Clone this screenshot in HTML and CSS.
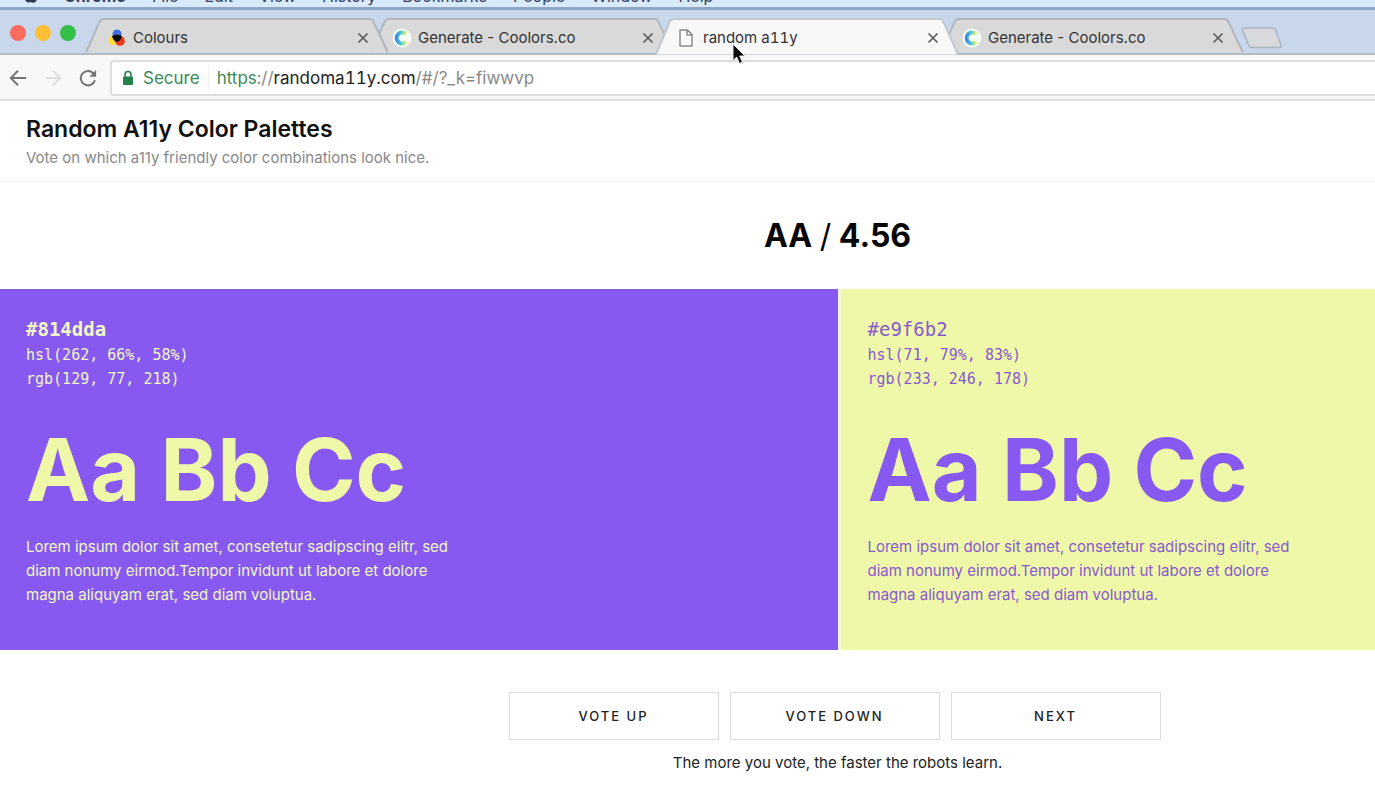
FILE: index.html
```html
<!DOCTYPE html>
<html lang="en">
<head>
<meta charset="utf-8">
<title>random a11y</title>
<link rel="stylesheet" href="styles.css">
</head>
<body>
<svg class="defs" aria-hidden="true">
  <defs>
    <linearGradient id="ring" x1="0" y1="0" x2="1" y2="0">
      <stop offset="0" stop-color="#3f8fe0"/><stop offset=".45" stop-color="#45c8dc"/><stop offset="1" stop-color="#e6f56a"/>
    </linearGradient>
    <symbol id="tab-shape" viewBox="0 0 302 36" preserveAspectRatio="none">
      <path d="M0 35.500 L14 3 Q15.500 1 18 1 H284 Q286 1 287 3 L302 35.500" stroke-width="2" vector-effect="non-scaling-stroke"/>
    </symbol>
    <symbol id="coolors" viewBox="0 0 20 20">
      <circle cx="10" cy="10" r="9.500" fill="#f4fbf4"/>
      <path d="M14 6 A5.500 5.500 0 1 0 14 14" fill="none" stroke="url(#ring)" stroke-width="4"/>
    </symbol>
    <symbol id="close" viewBox="0 0 12 12">
      <path d="M1.500 1.500 L10.500 10.500 M10.500 1.500 L1.500 10.500" fill="none" stroke="#5c5c5c" stroke-width="1.700"/>
    </symbol>
  </defs>
</svg>
<div class="window">
  <nav class="menubar" aria-label="Menu bar">
    <svg class="apple" viewBox="0 0 16 18"><path d="M8 5 C10 4 13 3 15 6 C12 8 13 12 16 13 C14 17 12 19 8 17 C4 19 1 15 1 10 C1 5 5 3 8 5Z" fill="#2b3850"/></svg>
    <b>Chrome</b><span>File</span><span>Edit</span><span>View</span><span>History</span><span>Bookmarks</span><span>People</span><span>Window</span><span>Help</span>
  </nav>
  <div class="tabstrip">
    <div class="lights"><i class="red"></i><i class="yellow"></i><i class="green"></i></div>
    <div class="tabs">
      <div class="tab first">
        <svg class="shape"><use href="#tab-shape"/></svg>
        <svg class="favicon" viewBox="0 0 20 20"><circle cx="10" cy="6" r="4.500" fill="#3f6fe0"/><circle cx="6" cy="12.500" r="4.500" fill="#ffe02e"/><circle cx="13" cy="13" r="4.800" fill="#ef3b1c"/><path d="M5 8 Q10 5 15 8 Q14 13 10 14 Q6 13 5 8Z" fill="#0b0b10"/></svg>
        <span class="label">Colours</span>
        <button class="close" aria-label="Close Colours"><svg><use href="#close"/></svg></button>
      </div>
      <div class="tab">
        <svg class="shape"><use href="#tab-shape"/></svg>
        <svg class="favicon"><use href="#coolors"/></svg>
        <span class="label">Generate - Coolors.co</span>
        <button class="close" aria-label="Close Generate"><svg><use href="#close"/></svg></button>
      </div>
      <div class="tab active">
        <svg class="shape"><use href="#tab-shape"/></svg>
        <svg class="favicon" viewBox="0 0 20 20"><path d="M3 2 H10.500 L15 6.500 V18 H3Z M10 2.500 V7 H15" fill="#fff" stroke="#8a8a8a" stroke-width="1.500" stroke-linejoin="round"/></svg>
        <span class="label">random a11y</span>
        <button class="close" aria-label="Close random a11y"><svg><use href="#close"/></svg></button>
        <svg class="pointer" viewBox="0 0 14 22"><path d="M1 1 V17.500 L4.700 14 L7.500 20.500 L10.500 19.200 L7.700 13 H13Z" fill="#0a0a0a" stroke="#eee" stroke-width="1"/></svg>
      </div>
      <div class="tab">
        <svg class="shape"><use href="#tab-shape"/></svg>
        <svg class="favicon"><use href="#coolors"/></svg>
        <span class="label">Generate - Coolors.co</span>
        <button class="close" aria-label="Close Generate"><svg><use href="#close"/></svg></button>
      </div>
    </div>
    <button class="newtab" aria-label="New tab"><svg viewBox="0 0 42 22"><path d="M3 1 H31 Q33.500 1 34.500 3 L40 18 Q41 20.500 38.500 20.500 H11 Q8.500 20.500 7.500 18 L1.500 3 Q1 1 3 1Z" fill="#d8d9dc" stroke="#a9b3c4" stroke-width="1.500"/></svg></button>
  </div>
  <div class="toolbar">
    <button class="tool" aria-label="Back"><svg viewBox="0 0 20 20"><path d="M19 10 H2.500 M10 2 L2 10 L10 18" fill="none" stroke="#747474" stroke-width="2.200"/></svg></button>
    <button class="tool" aria-label="Forward"><svg viewBox="0 0 20 20"><path d="M2 10 H17.500 M10 2 L18 10 L10 18" fill="none" stroke="#dedede" stroke-width="2.200"/></svg></button>
    <button class="tool" aria-label="Reload"><svg viewBox="0 0 20 20"><path d="M16.500 5.500 A8 8 0 1 0 17.700 12.500" fill="none" stroke="#747474" stroke-width="2.200"/><path d="M19 1 V8.500 H11.500Z" fill="#747474"/></svg></button>
    <div class="omnibox">
      <svg class="lock" viewBox="0 0 12 16"><path d="M3 7 V4.500 A3 3 0 0 1 9 4.500 V7" fill="none" stroke="#238048" stroke-width="1.600"/><rect x="1" y="6.500" width="10" height="8.500" rx="1" fill="#238048"/></svg>
      <span class="secure">Secure</span>
      <span class="url"><em>https</em>://<strong>randoma11y.com</strong>/#/?_k=fiwwvp</span>
    </div>
  </div>
  <header class="header">
    <h1>Random A11y Color Palettes</h1>
    <p>Vote on which a11y friendly color combinations look nice.</p>
  </header>
  <main>
    <h2 class="rating">AA <span>/</span> 4.56</h2>
    <div class="panels">
      <section class="panel violet">
        <p class="hex">#814dda</p>
        <p class="code">hsl(262, 66%, 58%)</p>
        <p class="code">rgb(129, 77, 218)</p>
        <p class="sample">Aa Bb Cc</p>
        <p class="lorem">Lorem ipsum dolor sit amet, consetetur sadipscing elitr, sed diam nonumy eirmod.Tempor invidunt ut labore et dolore magna aliquyam erat, sed diam voluptua.</p>
      </section>
      <section class="panel lime">
        <p class="hex">#e9f6b2</p>
        <p class="code">hsl(71, 79%, 83%)</p>
        <p class="code">rgb(233, 246, 178)</p>
        <p class="sample">Aa Bb Cc</p>
        <p class="lorem">Lorem ipsum dolor sit amet, consetetur sadipscing elitr, sed diam nonumy eirmod.Tempor invidunt ut labore et dolore magna aliquyam erat, sed diam voluptua.</p>
      </section>
    </div>
    <div class="votes">
      <button>VOTE UP</button>
      <button>VOTE DOWN</button>
      <button>NEXT</button>
    </div>
    <p class="note">The more you vote, the faster the robots learn.</p>
  </main>
</div>
</body>
</html>
```
FILE: styles.css
```css
* { box-sizing: border-box; margin: 0; padding: 0; }
body { overflow: hidden; background: #fff; color: #111; font-family: Inter, "Liberation Sans", sans-serif; }
button { border: 0; background: none; font: inherit; color: inherit; }
svg { display: block; }
.defs { position: absolute; width: 0; height: 0; }

/* The browser window is wider than the screen and runs off its right edge. */
.window { width: calc(100vw + 300px); }

.menubar { display: flex; align-items: flex-end; gap: 26px; height: 10px; padding: 0 0 2px 23px; overflow: hidden; background: #d9eafd; border-bottom: 3px solid #93a6c6; font-size: 16px; line-height: 18px; color: #34415a; }
.apple { width: 15px; height: 18px; padding-bottom: 2px; flex: none; }

.tabstrip { display: flex; align-items: flex-end; height: 45px; background: #c9d7ea; border-bottom: 2px solid #b3bbc5; }
.lights { display: flex; gap: 9px; align-self: center; width: 86px; padding: 2px 0 0 10px; }
.lights i { width: 16px; height: 16px; border-radius: 50%; }
.red { background: #fc6b60; }
.yellow { background: #fdbf35; }
.green { background: #34bf49; }
.tabs { display: flex; align-items: flex-end; }
.tab { position: relative; z-index: 0; display: flex; align-items: center; width: 302px; height: 35px; margin-right: -17px; padding: 4px 19px 0 21px; font-size: 15px; line-height: 20px; color: #333; }
.tab.first { z-index: 1; }
.tab.active { z-index: 2; margin-bottom: -2px; height: 37px; padding-top: 2px; font-variant-numeric: tabular-nums; }
.shape { position: absolute; inset: 0; z-index: -1; width: 100%; height: 100%; fill: #d9d9d9; stroke: #b0b6bd; }
.active .shape { fill: #f8f8f8; stroke: #c3c8d0; }
.favicon { width: 20px; height: 20px; }
.label { flex: 1; margin-left: 6px; white-space: nowrap; }
.close { width: 12px; height: 12px; }
.close svg { width: 12px; height: 12px; }
.pointer { position: absolute; left: 76px; top: 25px; width: 14px; height: 22px; }
.newtab { width: 42px; height: 22px; margin: 0 0 4px 15px; }

.toolbar { display: flex; align-items: center; gap: 17px; height: 46px; padding: 2px 0 1px 9px; background: #f8f8f8; border-bottom: 2px solid #e2e2e2; }
.tool { width: 18px; height: 18px; }
.omnibox { display: flex; flex: 1; align-items: center; height: 36px; margin-left: -4px; padding-left: 10px; background: #fff; border: 2px solid #dcdcdc; border-radius: 4px; font-size: 17px; line-height: 24px; font-variant-numeric: tabular-nums; color: #888; }
.lock { width: 12px; height: 16px; }
.secure { margin-left: 9px; padding-right: 8px; border-right: 1px solid #eee; color: #3c8a58; }
.url { margin-left: 8px; white-space: nowrap; }
.url em { font-style: normal; color: #3c8a58; }
.url strong { font-weight: 400; color: #222; }

.header { padding: 14px 26px 11px; border-bottom: 1px solid #f6f6f6; }
.header h1 { font-size: 23px; font-weight: 600; line-height: 28px; }
.header p { margin-top: 3px; font-size: 15px; line-height: 24px; color: #888; }

.rating { padding: 33px 0 32px; font-size: 32px; line-height: 42px; font-weight: 700; text-align: center; color: #050505; }
.rating span { font-weight: 400; }
.panels { display: grid; grid-template-columns: 1fr 1fr; }
.panel { padding: 26px 26px 43px; }
.violet { background: #8859f1; color: #f0f7c4; }
.lime { padding-left: 27px; background: #eff8a8; color: #8859cf; border-left: 3px solid #f4f8d8; }
.hex, .code { font-family: "DejaVu Sans Mono", "Liberation Mono", monospace; }
.hex { font-size: 19px; line-height: 28px; }
.code { font-size: 15px; line-height: 24px; }
.violet .hex { font-weight: 700; }
.sample { margin: 27px 0 13px; font-size: 86px; line-height: 104px; font-weight: 700; }
.violet .sample { color: #eff8a8; }
.lime .sample { color: #8859f1; }
.lorem { max-width: 432px; font-size: 15px; line-height: 24px; }

.votes { display: flex; justify-content: center; gap: 11px; padding: 42px 6px 0 0; }
.votes button { width: 210px; height: 48px; border: 1px solid #dcdcdc; background: #fff; font-size: 13px; font-weight: 500; letter-spacing: 2px; color: #222; }
.note { margin-top: 11px; font-size: 15px; line-height: 24px; text-align: center; color: #222; }
```
